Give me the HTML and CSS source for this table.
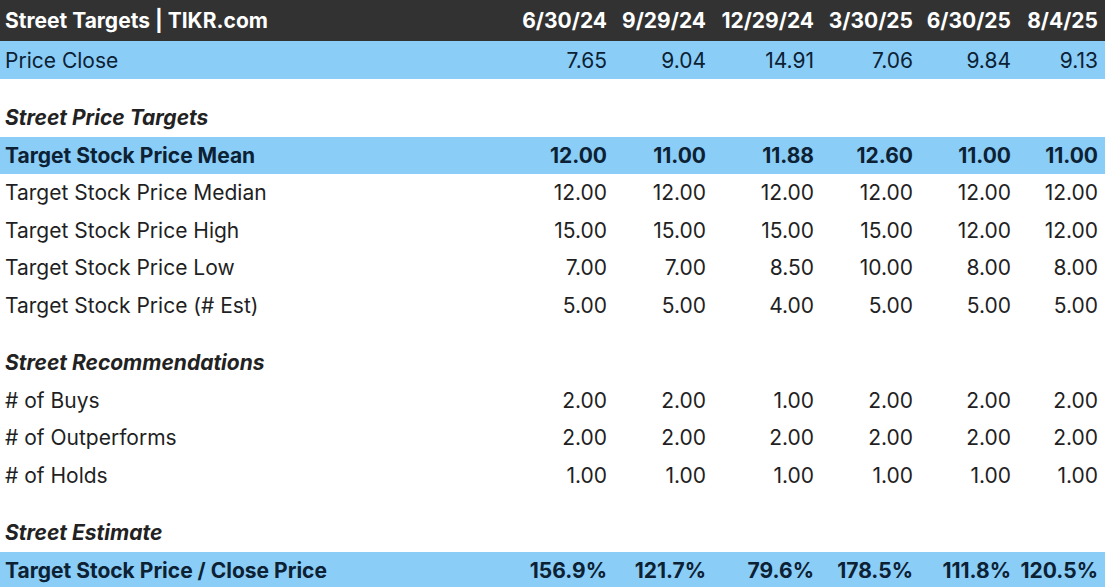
FILE: index.html
```html
<!DOCTYPE html>
<html>
<head>
<meta charset="utf-8">
<link rel="stylesheet" href="styles.css">
</head>
<body>
<div class="table">
  <div class="row head">
    <div class="label">Street Targets | TIKR.com</div>
    <div>6/30/24</div><div>9/29/24</div><div>12/29/24</div><div>3/30/25</div><div>6/30/25</div><div>8/4/25</div>
  </div>
  <div class="row blue first">
    <div class="label">Price Close</div>
    <div>7.65</div><div>9.04</div><div>14.91</div><div>7.06</div><div>9.84</div><div>9.13</div>
  </div>
  <div class="spacer"></div>
  <div class="row section"><div class="label">Street Price Targets</div></div>
  <div class="row blue bold">
    <div class="label">Target Stock Price Mean</div>
    <div>12.00</div><div>11.00</div><div>11.88</div><div>12.60</div><div>11.00</div><div>11.00</div>
  </div>
  <div class="row">
    <div class="label">Target Stock Price Median</div>
    <div>12.00</div><div>12.00</div><div>12.00</div><div>12.00</div><div>12.00</div><div>12.00</div>
  </div>
  <div class="row">
    <div class="label">Target Stock Price High</div>
    <div>15.00</div><div>15.00</div><div>15.00</div><div>15.00</div><div>12.00</div><div>12.00</div>
  </div>
  <div class="row">
    <div class="label">Target Stock Price Low</div>
    <div>7.00</div><div>7.00</div><div>8.50</div><div>10.00</div><div>8.00</div><div>8.00</div>
  </div>
  <div class="row">
    <div class="label">Target Stock Price (# Est)</div>
    <div>5.00</div><div>5.00</div><div>4.00</div><div>5.00</div><div>5.00</div><div>5.00</div>
  </div>
  <div class="spacer"></div>
  <div class="row section"><div class="label">Street Recommendations</div></div>
  <div class="row">
    <div class="label"># of Buys</div>
    <div>2.00</div><div>2.00</div><div>1.00</div><div>2.00</div><div>2.00</div><div>2.00</div>
  </div>
  <div class="row">
    <div class="label"># of Outperforms</div>
    <div>2.00</div><div>2.00</div><div>2.00</div><div>2.00</div><div>2.00</div><div>2.00</div>
  </div>
  <div class="row">
    <div class="label"># of Holds</div>
    <div>1.00</div><div>1.00</div><div>1.00</div><div>1.00</div><div>1.00</div><div>1.00</div>
  </div>
  <div class="spacer"></div>
  <div class="row section"><div class="label">Street Estimate</div></div>
  <div class="row blue bold">
    <div class="label">Target Stock Price / Close Price</div>
    <div>156.9%</div><div>121.7%</div><div>79.6%</div><div>178.5%</div><div>111.8%</div><div>120.5%</div>
  </div>
</div>
</body>
</html>
```

FILE: styles.css
```css
html, body {
  margin: 0;
  padding: 0;
  background: #ffffff;
}
body {
  font-family: Inter, "Liberation Sans", sans-serif;
  font-size: 21px;
  color: #1f1f24;
  width: 1105px;
  height: 587px;
  overflow: hidden;
}
.table {
  display: flex;
  flex-direction: column;
}
.row {
  display: grid;
  grid-template-columns: 508px 99px 99px 108px 99px 98px 87px;
  height: 37.5px;
  flex-shrink: 0;
  align-items: center;
  padding-right: 7px;
}
.row > div {
  text-align: right;
  white-space: nowrap;
}
.row > .label {
  text-align: left;
  padding-left: 5px;
}
.head {
  height: 41px;
  background: #323232;
  color: #ffffff;
  font-weight: 700;
  font-size: 21px;
}
.first {
  height: 38px;
}
.blue {
  background: #8acdf7;
  color: #0c2133;
}
.bold {
  font-weight: 700;
}
.section {
  font-weight: 700;
  font-style: italic;
  color: #222222;
}
.spacer {
  height: 20px;
  flex-shrink: 0;
}
```
